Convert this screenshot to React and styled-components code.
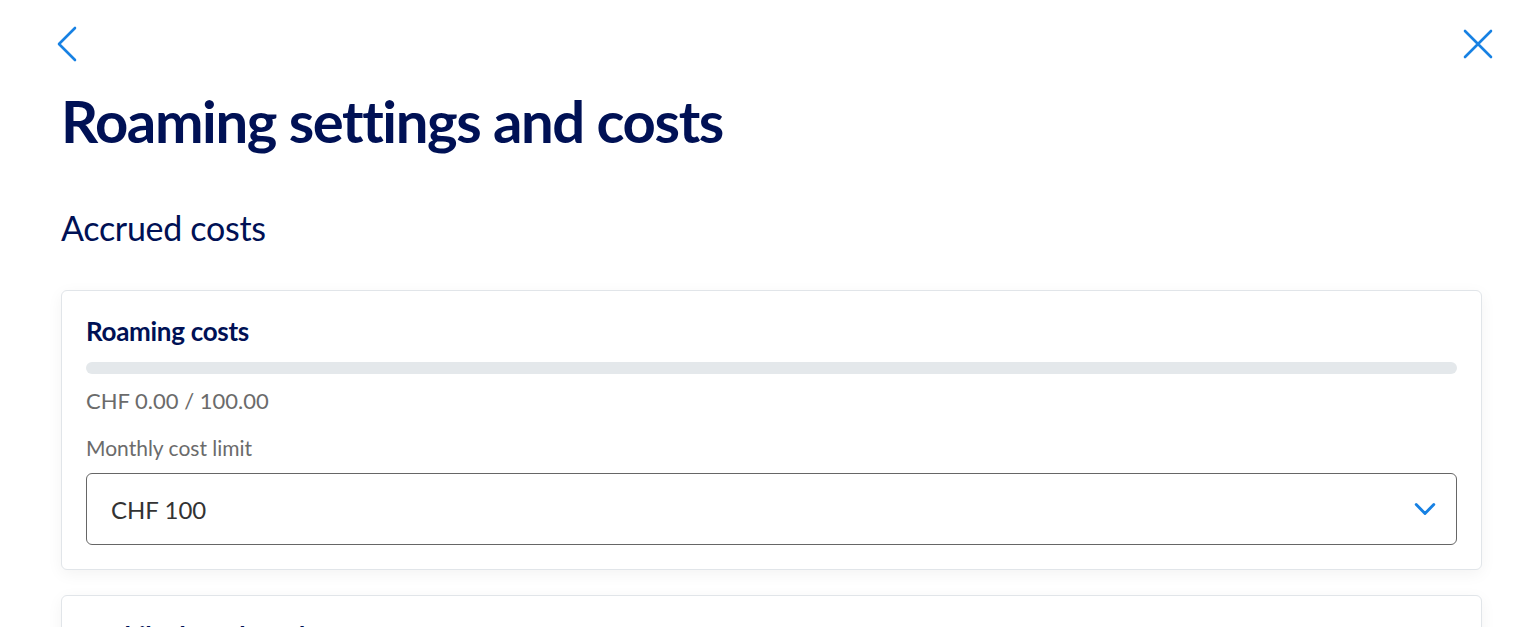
import React from "react";
import styled, { createGlobalStyle } from "styled-components";

const GlobalStyle = createGlobalStyle`
  html, body {
    margin: 0;
    padding: 0;
    background: #ffffff;
    font-family: Lato, "Noto Sans", sans-serif;
    overflow: hidden;
  }
`;

const Page = styled.div`
  padding: 24px 28px 0 61px;
  box-sizing: border-box;
  width: 1522px;
  height: 627px;
  overflow: hidden;
`;

const TopBar = styled.div`
  display: flex;
  justify-content: space-between;
  align-items: center;
  height: 40px;
  margin-left: -12px;
`;

const IconButton = styled.button`
  border: none;
  background: none;
  padding: 0;
  width: 32px;
  height: 40px;
  display: flex;
  align-items: center;
  justify-content: center;
  cursor: pointer;
  color: #1781e3;
`;

const Title = styled.h1`
  margin: 21px 0 0 0;
  font-size: 58px;
  line-height: 72px;
  font-weight: 700;
  color: #001155;
  letter-spacing: -1.4px;
`;

const SectionTitle = styled.h2`
  margin: 51px 0 0 0;
  font-size: 34px;
  line-height: 40px;
  font-weight: 400;
  color: #001155;
  letter-spacing: -0.3px;
`;

const Card = styled.div`
  margin-top: ${({ $top }) => $top}px;
  width: 1421px;
  box-sizing: border-box;
  border: 1px solid #e1e5e9;
  border-radius: 6px;
  background: #fff;
  box-shadow: 0 4px 16px rgba(0, 0, 0, 0.05);
  padding: 24px;
`;

const CardTitle = styled.div`
  font-size: 26px;
  line-height: 32px;
  font-weight: 700;
  color: #001155;
  letter-spacing: -0.3px;
`;

const Track = styled.div`
  margin-top: 15px;
  height: 12px;
  border-radius: 6px;
  background: #e4e8eb;
  overflow: hidden;
`;

const Fill = styled.div`
  height: 100%;
  background: #1781e3;
`;

const Muted = styled.div`
  margin-top: ${({ $top }) => $top}px;
  font-size: ${({ $size }) => $size}px;
  line-height: 30px;
  color: #6b6b6b;
`;

const Select = styled.div`
  margin-top: 10px;
  height: 72px;
  box-sizing: border-box;
  border: 1px solid #666666;
  border-radius: 6px;
  display: flex;
  align-items: center;
  justify-content: space-between;
  padding: 0 20px 0 24px;
  font-size: 24px;
  color: #333333;
`;

const BackIcon = () => (
  <svg width="24" height="38" viewBox="0 0 24 36" fill="none">
    <path d="M22 2 L6 18 L22 34" stroke="currentColor" strokeWidth="2.6" strokeLinecap="round" strokeLinejoin="round" />
  </svg>
);

const DownIcon = () => (
  <svg width="22" height="14" viewBox="0 0 20 12" fill="none">
    <path d="M2 2 L10 10 L18 2" stroke="#1781e3" strokeWidth="2.6" strokeLinecap="round" strokeLinejoin="round" />
  </svg>
);

const CloseIcon = () => (
  <svg width="32" height="32" viewBox="0 0 32 32" fill="none">
    <path d="M3 3 L29 29 M29 3 L3 29" stroke="currentColor" strokeWidth="2.6" strokeLinecap="round" />
  </svg>
);

export default function App() {
  const used = 0;
  const limit = 100;
  return (
    <>
      <GlobalStyle />
      <Page>
        <TopBar>
          <IconButton aria-label="Back">
            <BackIcon />
          </IconButton>
          <IconButton aria-label="Close">
            <CloseIcon />
          </IconButton>
        </TopBar>
        <Title>Roaming settings and costs</Title>
        <SectionTitle>Accrued costs</SectionTitle>
        <Card $top={42}>
          <CardTitle>Roaming costs</CardTitle>
          <Track>
            <Fill style={{ width: `${(used / limit) * 100}%` }} />
          </Track>
          <Muted $top={12} $size={22}>CHF 0.00 / 100.00</Muted>
          <Muted $top={17} $size={21}>Monthly cost limit</Muted>
          <Select>
            <span>CHF 100</span>
            <DownIcon />
          </Select>
        </Card>
        <Card $top={25}>
          <CardTitle>Mobile data abroad</CardTitle>
        </Card>
      </Page>
    </>
  );
}
